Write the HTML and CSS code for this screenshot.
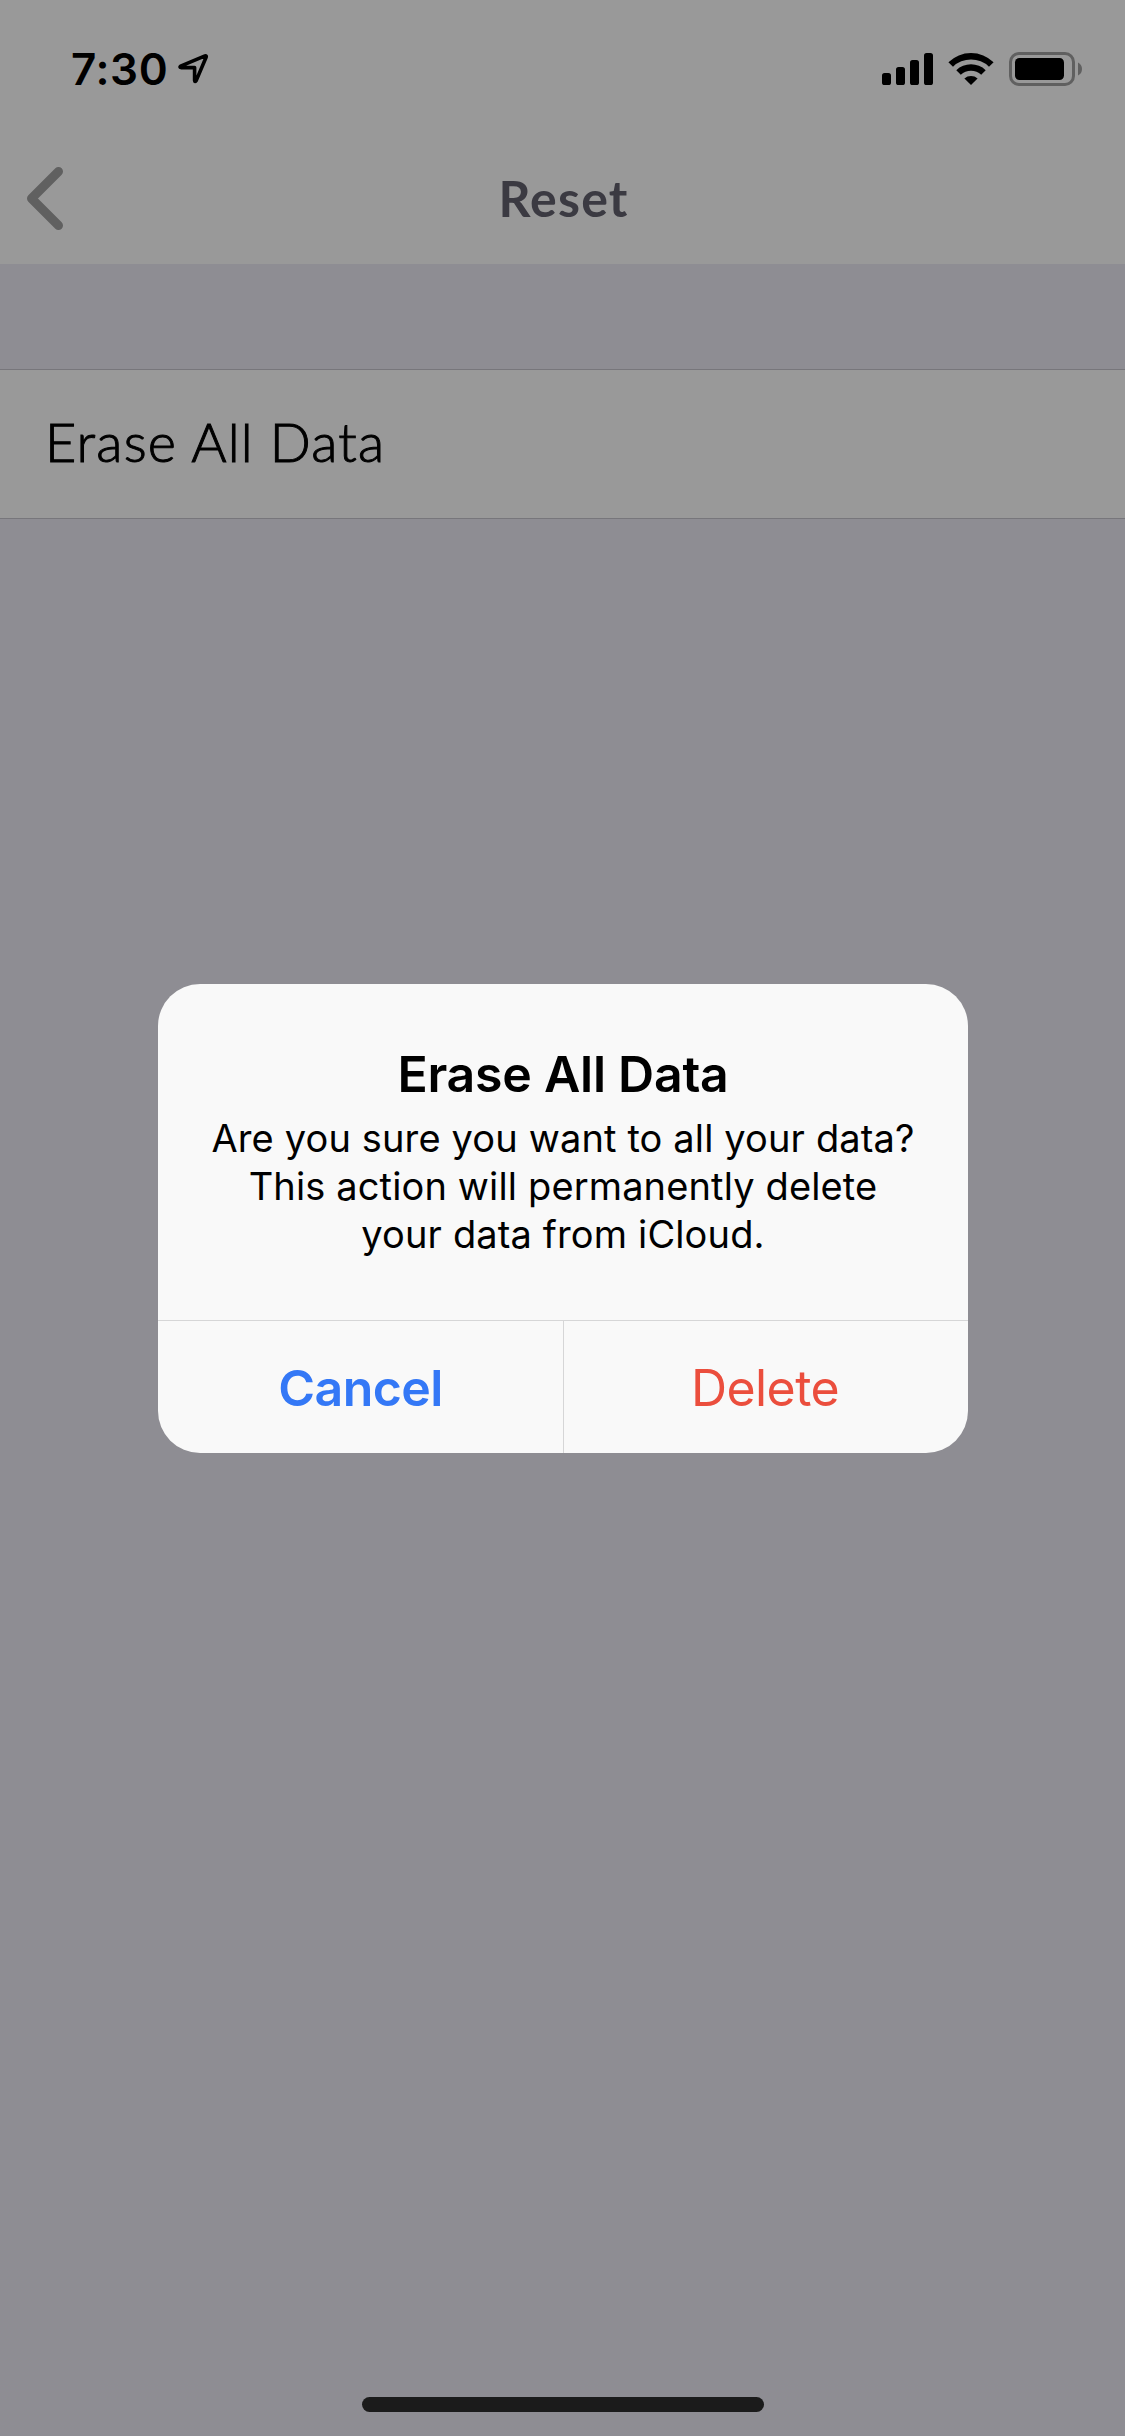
FILE: index.html
```html
<!DOCTYPE html>
<html lang="en">
<head>
<meta charset="utf-8">
<title>Reset</title>
<link rel="stylesheet" href="styles.css">
</head>
<body>
<div class="screen">
  <header class="header">
    <div class="status">
      <span class="time">7:30</span>
      <svg class="location" width="34" height="34" viewBox="0 0 34 34"><path d="M4.6 15.2 29 4.9Q30.7 4.5 30.2 6L20.2 29.6Q18.7 31.4 18.6 29.4V16.6H5Q3.2 16.2 4.6 15.2Z"/></svg>
      <svg class="indicators" width="206" height="40" viewBox="0 0 206 40">
        <rect x="4" y="23" width="9" height="12" rx="2.6"/><rect x="18" y="17" width="9" height="18" rx="2.6"/><rect x="32" y="10" width="9" height="25" rx="2.6"/><rect x="46" y="3" width="9" height="32" rx="2.6"/>
        <path d="M70.4 12.2A32.4 32.4 0 0 1 115.6 12.2L111 16.7A26 26 0 0 0 75 16.7Z"/>
        <path d="M78.3 20.2A21.3 21.3 0 0 1 107.7 20.2L103.2 24.8A14.8 14.8 0 0 0 82.8 24.8Z"/>
        <path d="M86.4 28.4A10.2 10.2 0 0 1 99.6 28.4L93 35Z"/>
        <rect class="battery-shell" x="132.5" y="3.5" width="63" height="31" rx="8.5"/>
        <rect x="137" y="8" width="49" height="22" rx="4.5"/>
        <path class="battery-nub" d="M200 12.5Q204 14.5 204 19T200 25.5Z"/>
      </svg>
    </div>
    <nav class="nav">
      <svg class="back" width="60" height="66" viewBox="0 0 60 66"><path d="M44.5 6.500 17.500 33.500 44.500 60.500"/></svg>
      <h1 class="nav-title">Reset</h1>
    </nav>
  </header>
  <main class="content">
    <div class="row">Erase All Data</div>
  </main>
  <div class="home"></div>
  <div class="overlay">
    <section class="dialog">
      <div class="dialog-body">
        <h2 class="dialog-title">Erase All Data</h2>
        <p class="message">Are you sure you want to all your data?<br>This action will permanently delete<br>your data from iCloud.</p>
      </div>
      <div class="actions">
        <button class="action cancel">Cancel</button>
        <button class="action delete">Delete</button>
      </div>
    </section>
  </div>
</div>
</body>
</html>
```
FILE: styles.css
```css
* { box-sizing: border-box; }
body { margin: 0; font-family: Inter, "Liberation Sans", sans-serif; color: #000; }
.screen { position: relative; width: 1125px; height: 2436px; display: flex; flex-direction: column; background: #8e8d93; overflow: hidden; }
.header { height: 264px; background: #999; }
.status { height: 132px; display: flex; align-items: flex-start; padding: 49px 41px 0 71px; }
.time { width: 105px; font-size: 44px; line-height: 40px; font-weight: 600; letter-spacing: .6px; white-space: nowrap; }
.location { margin: 2px 0 0; fill: none; stroke: #000; stroke-width: 3.6; stroke-linejoin: round; }
.indicators { margin: 1px 0 0 auto; }
.battery-shell { fill: none; stroke: #606060; stroke-width: 3; }
.battery-nub { fill: #606060; }
.nav { height: 132px; display: grid; grid-template-columns: 200px 1fr 200px; align-items: center; }
.back { margin: 0 0 0 14px; fill: none; stroke: #606060; stroke-width: 9; stroke-linecap: round; stroke-linejoin: round; }
.nav-title { margin: 0; padding-left: 2px; text-align: center; font: 700 50px/60px Lato, sans-serif; letter-spacing: 1.2px; color: #3b3a42; }
.content { flex: 1; padding-top: 105px; }
.row { height: 150px; padding: 0 45px; border: solid #77767b; border-width: 1px 0; background: #999; font: 300 54px/144px Lato, sans-serif; letter-spacing: 1.2px; -webkit-text-stroke: 1px #000; white-space: nowrap; }
.home { align-self: center; width: 402px; height: 15px; margin: 0 0 24px 1px; border-radius: 8px; background: #1b1b1b; }
.overlay { position: absolute; inset: 0; display: flex; align-items: center; justify-content: center; padding: 1px 0 0 1px; }
.dialog { width: 810px; height: 469px; border-radius: 42px; background: #f9f9f9; overflow: hidden; display: flex; flex-direction: column; }
.dialog-body { height: 336px; padding-top: 60px; text-align: center; }
.dialog-title { margin: 0; font-size: 50px; line-height: 60px; font-weight: 600; letter-spacing: -.25px; }
.message { margin: 10px 0 0; font-size: 38px; line-height: 48px; letter-spacing: .14px; white-space: nowrap; }
.actions { flex: 1; display: grid; grid-template-columns: 405px 1fr; border-top: 1px solid #d6d6d7; }
.action { margin: 0; padding: 2px 0 0; border: 0; background: none; font: 400 50px/60px Inter, sans-serif; letter-spacing: -.6px; }
.cancel { color: #3478f6; font-weight: 600; }
.delete { padding-right: 2px; color: #eb4e3d; border-left: 1px solid #d6d6d7; }
```
